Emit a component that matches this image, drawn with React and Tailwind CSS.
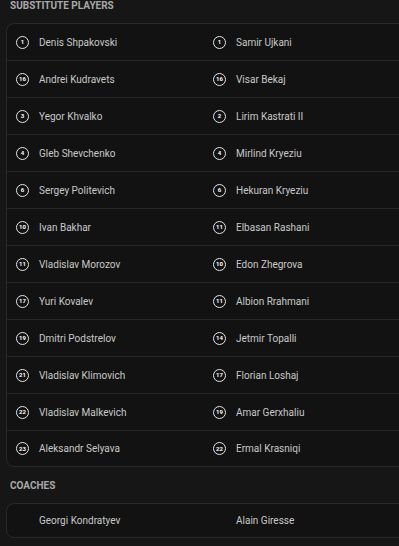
import React from 'react';

const home = [
    [1, 'Denis Shpakovski'],
    [16, 'Andrei Kudravets'],
    [3, 'Yegor Khvalko'],
    [4, 'Gleb Shevchenko'],
    [6, 'Sergey Politevich'],
    [10, 'Ivan Bakhar'],
    [11, 'Vladislav Morozov'],
    [17, 'Yuri Kovalev'],
    [19, 'Dmitri Podstrelov'],
    [21, 'Vladislav Klimovich'],
    [22, 'Vladislav Malkevich'],
    [23, 'Aleksandr Selyava'],
];

const away = [
    [1, 'Samir Ujkani'],
    [16, 'Visar Bekaj'],
    [2, 'Lirim Kastrati II'],
    [4, 'Mirlind Kryeziu'],
    [6, 'Hekuran Kryeziu'],
    [11, 'Elbasan Rashani'],
    [10, 'Edon Zhegrova'],
    [11, 'Albion Rrahmani'],
    [14, 'Jetmir Topalli'],
    [17, 'Florian Loshaj'],
    [19, 'Amar Gerxhaliu'],
    [22, 'Ermal Krasniqi'],
];

const Player = ({ number, name }) => (
    <div className="flex items-center h-full pl-[9px]">
        {number != null ? (
            <span className="w-[13px] h-[13px] rounded-full border-[1.5px] border-[#e6e6e6] flex items-center justify-center text-[6px] font-bold text-white leading-none shrink-0">
                {number}
            </span>
        ) : (
            <span className="w-[13px] shrink-0" />
        )}
        <span className="ml-[10px] text-[10px] text-[#c9c9c9] whitespace-nowrap">{name}</span>
    </div>
);

const SectionTitle = ({ children }) => (
    <div className="pl-[10px] text-[10px] leading-[11px] font-bold text-[#a9a9a9]">{children}</div>
);

const App = () => {
    return (
        <div
            className="w-[399px] h-[546px] overflow-hidden bg-[#161616]"
            style={{ fontFamily: 'Roboto, "Liberation Sans", sans-serif' }}
        >
            <div className="h-[23px]">
                <SectionTitle>SUBSTITUTE PLAYERS</SectionTitle>
            </div>

            {/* substitutes card, runs off the right edge */}
            <div className="ml-[6px] w-[410px] rounded-l-[8px] border border-[#2a2a2a] bg-[#121212]">
                {home.map(([num, name], idx) => (
                    <div
                        key={idx}
                        className={`grid grid-cols-[197px_1fr] ${idx === 0 || idx === home.length - 1 ? 'h-[36px]' : 'h-[37px]'} ${idx > 0 ? 'border-t border-[#262626]' : ''}`}
                    >
                        <Player number={num} name={name} />
                        <Player number={away[idx][0]} name={away[idx][1]} />
                    </div>
                ))}
            </div>

            <div className="h-[36px] flex items-center">
                <SectionTitle>COACHES</SectionTitle>
            </div>

            <div className="ml-[6px] w-[410px] h-[35px] rounded-l-[8px] border border-[#2a2a2a] bg-[#121212] grid grid-cols-[197px_1fr]">
                <Player name="Georgi Kondratyev" />
                <Player name="Alain Giresse" />
            </div>
        </div>
    );
};

export default App;
